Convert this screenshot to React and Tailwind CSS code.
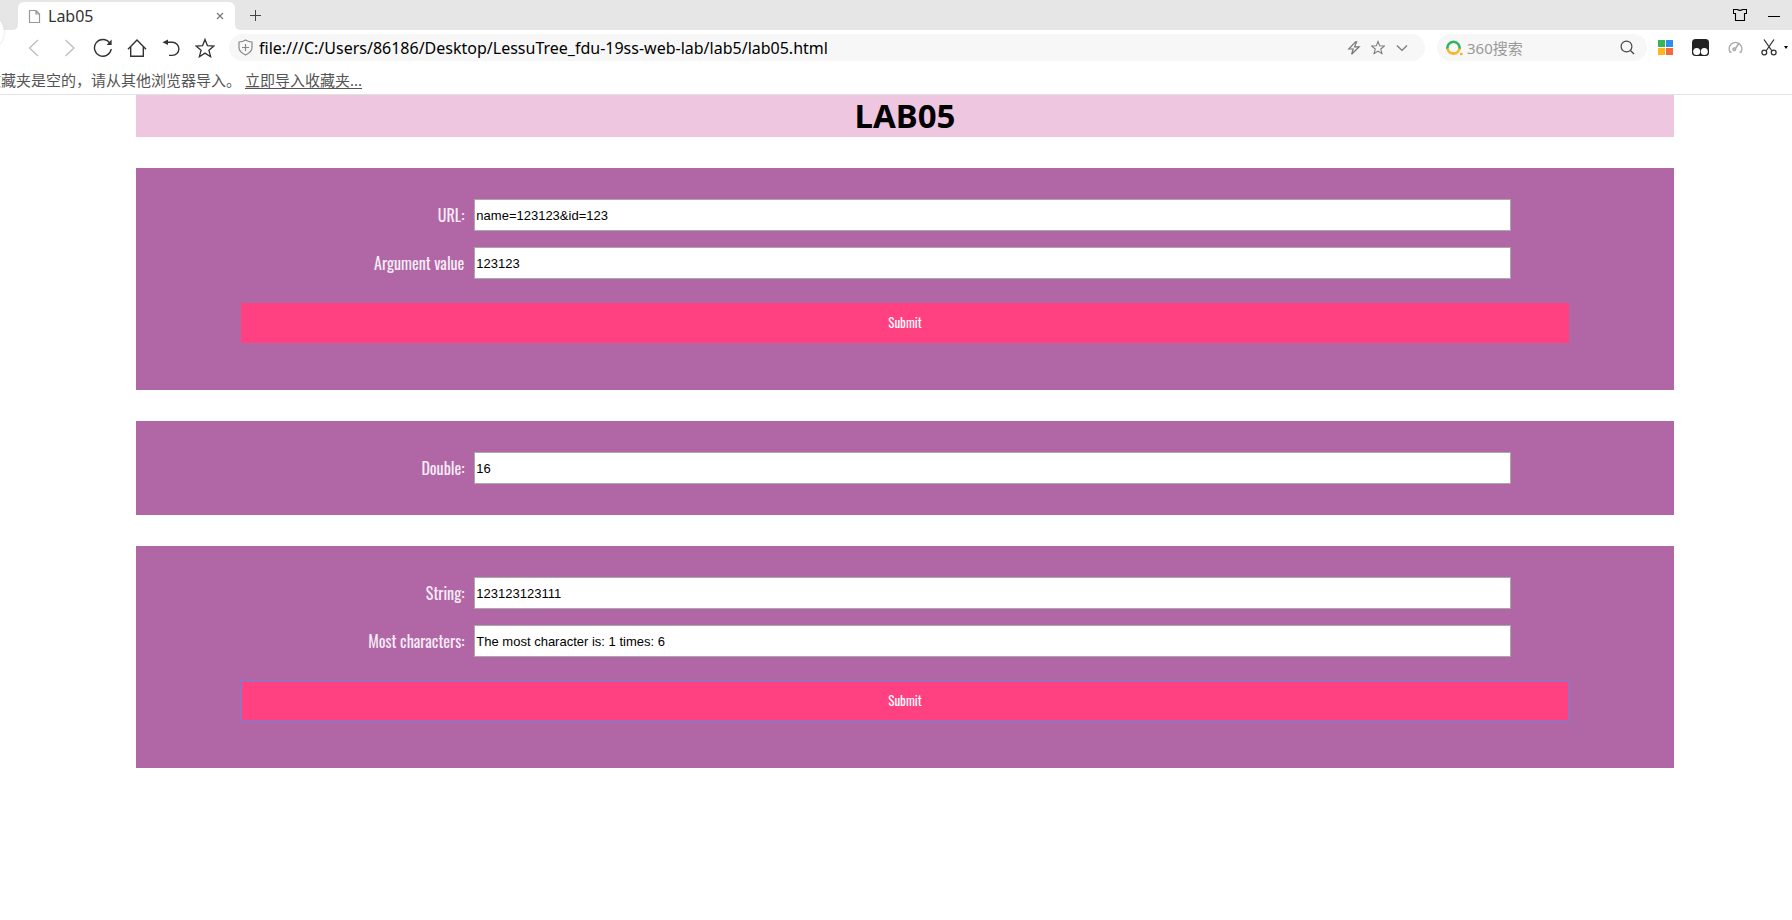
import React from "react";

const icon = {
  fill: "none",
  stroke: "currentColor",
  strokeWidth: 1.2,
  "aria-hidden": true,
};

function IconButton({ label, className, children }) {
  return (
    <button type="button" aria-label={label} className={"flex shrink-0 items-center justify-center " + className}>
      {children}
    </button>
  );
}

function Star({ size, width = 1.3 }) {
  return (
    <svg {...icon} width={size} height={size} viewBox="0 0 20 20" strokeWidth={width}>
      <path d="M10 1.4 12.4 7.6 19 8 13.9 12.2 15.6 18.7 10 15.1 4.4 18.7 6.1 12.2 1 8 7.6 7.6Z" />
    </svg>
  );
}

function TabStrip() {
  return (
    <div className="relative flex h-[30px] bg-[#e6e6e6] pl-3">
      <span
        aria-hidden="true"
        className="absolute top-[13px] -left-[34px] size-[38px] rounded-full bg-white shadow-[0_0_2px_#ccc]"
      />
      <svg className="self-end" width="6" height="6" viewBox="0 0 6 6" aria-hidden="true">
        <path d="M6 0v6H0Q6 6 6 0z" fill="#fff" />
      </svg>
      <div className="mt-[2px] flex w-[217px] items-center rounded-t-md bg-white pr-[9px] pl-[10px]">
        <svg {...icon} className="text-[#999]" width="13" height="15" viewBox="0 0 13 15">
          <path d="M1.5 1.5h6.5l3.5 3.5v8.500h-10zM8 1.500V5h3.500" />
        </svg>
        <span className="ml-[7px] flex-1 text-base leading-6 text-[#333]">Lab05</span>
        <IconButton label="Close tab" className="size-3 text-[#777]">
          <svg {...icon} width="8" height="8" viewBox="0 0 8 8">
            <path d="m1 1 6 6M7 1 1 7" />
          </svg>
        </IconButton>
      </div>
      <svg className="self-end" width="6" height="6" viewBox="0 0 6 6" aria-hidden="true">
        <path d="M0 0v6h6Q0 6 0 0z" fill="#fff" />
      </svg>
      <IconButton label="New tab" className="ml-[6px] w-4 text-[#444]">
        <svg {...icon} width="11" height="11" viewBox="0 0 11 11" strokeWidth="1">
          <path d="M5.500 0v11M0 5.500h11" />
        </svg>
      </IconButton>
      <IconButton label="Skin" className="ml-auto w-4 text-black">
        <svg {...icon} width="14" height="14" viewBox="0 0 14 14" strokeWidth="1.100">
          <path d="M.5 1.500H4.300Q7 3.300 9.700 1.500H13.500V5.500H11.500V12.500H2.500V5.500H.5z" />
        </svg>
      </IconButton>
      <IconButton label="Minimize" className="mr-[10px] ml-[18px] w-4 text-black">
        <svg {...icon} width="12" height="12" viewBox="0 0 12 12">
          <path d="M0 7.500h12" strokeWidth="1" />
        </svg>
      </IconButton>
    </div>
  );
}

function Toolbar() {
  return (
    <div className="flex h-[35px] items-center pl-[23px]">
      <div className="flex items-center gap-[10px] text-[#333]">
        <IconButton label="Back" className="size-6 text-[#bbb]">
          <svg {...icon} width="20" height="20" viewBox="0 0 20 20">
            <path d="M13 2 4.500 10 13 18" />
          </svg>
        </IconButton>
        <IconButton label="Forward" className="size-6 text-[#bbb]">
          <svg {...icon} width="20" height="20" viewBox="0 0 20 20">
            <path d="M6.500 2 15 10 6.500 18" />
          </svg>
        </IconButton>
        <IconButton label="Reload" className="size-6">
          <svg {...icon} width="20" height="20" viewBox="0 0 20 20" strokeWidth="1.4">
            <path d="M16.600 4.800A8.400 8.400 0 1 0 18.200 11" />
            <path d="M18.600 1.500V7h-5z" fill="currentColor" stroke="none" />
          </svg>
        </IconButton>
        <IconButton label="Home" className="size-6">
          <svg {...icon} width="20" height="20" viewBox="0 0 20 20" strokeWidth="1.4">
            <path d="M1 11.200 10 2l9 9.200M3.700 9v9.300h12.600V9" />
          </svg>
        </IconButton>
        <IconButton label="Undo" className="size-6">
          <svg {...icon} width="20" height="20" viewBox="0 0 20 20" strokeWidth="1.4">
            <path d="M5 4.200h6.300a6.600 6.600 0 0 1 0 13.200H8" />
            <path d="M1.500 4.200 7 1.400v5.600z" fill="currentColor" stroke="none" />
          </svg>
        </IconButton>
        <IconButton label="Favorites" className="size-6">
          <Star size={20} />
        </IconButton>
      </div>
      <div className="ml-[12px] flex h-[27px] flex-1 items-center rounded-full bg-[#f7f7f7] pr-[16px] pl-[9px]">
        <svg {...icon} className="text-[#888]" width="15" height="17" viewBox="0 0 15 17">
          <path d="M7.500 1Q10.500 3 14 3v5.500q0 4.500-6.500 7.500Q1 13 1 8.500V3Q4.500 3 7.500 1ZM7.500 5v7M4 8.500h7" />
        </svg>
        <input
          aria-label="Address"
          defaultValue="file:///C:/Users/86186/Desktop/LessuTree_fdu-19ss-web-lab/lab5/lab05.html"
          className="ml-[6px] h-full flex-1 bg-transparent text-base text-black outline-none"
        />
        <div className="flex items-center gap-[10px] text-[#777]">
          <IconButton label="Speed mode" className="size-[14px]">
            <svg {...icon} width="14" height="14" viewBox="0 0 14 14">
              <path d="M8.500.8 1.800 8h4.400L4.600 13.200 12.200 5.800H7.600L9.600.8Z" />
            </svg>
          </IconButton>
          <IconButton label="Add favorite" className="size-[14px]">
            <Star size={15} width={1.5} />
          </IconButton>
          <IconButton label="History" className="size-[14px]">
            <svg {...icon} width="12" height="8" viewBox="0 0 12 8">
              <path d="m1 1.500 5 5 5-5" />
            </svg>
          </IconButton>
        </div>
      </div>
      <div className="ml-[12px] flex h-[27px] w-[210px] items-center rounded-full bg-[#f7f7f7] pr-[12px] pl-[9px]">
        <svg width="17" height="16" viewBox="0 0 17 16" fill="none" strokeWidth="2.600" aria-hidden="true">
          <path d="M1.500 9A6.100 6.100 0 1 1 13.500 9" stroke="#2cb563" />
          <path d="M1.500 8.600A6.100 6.100 0 0 0 13.500 8.600" stroke="#f2b827" />
          <circle cx="15.300" cy="14" r="1.300" fill="#f6a523" />
        </svg>
        <input
          aria-label="Search"
          placeholder="360搜索"
          className="ml-[4px] h-full w-0 flex-1 bg-transparent text-[15px] outline-none placeholder:text-[#999]"
        />
        <IconButton label="Search" className="size-4 text-[#444]">
          <svg {...icon} width="15" height="15" viewBox="0 0 15 15">
            <circle cx="6.500" cy="6.500" r="5.400" />
            <path d="m10.500 10.500 3.500 3.500" />
          </svg>
        </IconButton>
      </div>
      <div className="ml-[10px] flex items-center">
        <IconButton label="Apps" className="size-4">
          <svg width="15" height="15" viewBox="0 0 15 15" aria-hidden="true">
            <path d="M0 0h7v7H0z" fill="#35b558" />
            <path d="M8 0h7v7H8z" fill="#2b8df0" />
            <path d="M0 8h7v7H0z" fill="#fdb71c" />
            <path d="M8 8h7v7H8z" fill="#f6693c" />
          </svg>
        </IconButton>
        <IconButton label="Scripts" className="ml-[18px] size-[18px]">
          <svg width="17" height="17" viewBox="0 0 17 17" aria-hidden="true">
            <rect width="17" height="17" rx="3.500" fill="#222" />
            <circle cx="4.700" cy="12.600" r="3.500" fill="#fff" />
            <circle cx="12.300" cy="12.600" r="3.500" fill="#fff" />
          </svg>
        </IconButton>
        <IconButton label="Accelerator" className="ml-[18px] size-4 text-[#aaa]">
          <svg {...icon} width="15" height="15" viewBox="0 0 15 15" strokeWidth="1.500">
            <path d="M3.500 12.200H2.200A6.300 6.300 0 1 1 12.800 12.200H11.500M5 9.200a1.300 1.300 0 1 0 2.600 0 1.300 1.300 0 0 0-2.600 0M7.500 8.500l3-4.500" />
          </svg>
        </IconButton>
        <IconButton label="Screenshot" className="ml-[18px] size-4 text-[#333]">
          <svg {...icon} width="16" height="17" viewBox="0 0 16 17" strokeWidth="1.300">
            <path d="M3 .5 11 12M13 .5 5 12" />
            <circle cx="3.300" cy="13.500" r="2.400" />
            <circle cx="12.700" cy="13.500" r="2.400" />
          </svg>
        </IconButton>
        <IconButton label="Screenshot options" className="mr-[4px] ml-[7px] w-1 text-black">
          <svg width="4" height="3" viewBox="0 0 4 3" aria-hidden="true">
            <path d="M0 0h4L2 3z" fill="currentColor" />
          </svg>
        </IconButton>
      </div>
    </div>
  );
}

function FavoritesBar() {
  return (
    <div className="flex h-[30px] items-center overflow-hidden border-b border-[#e2e2e4] text-[15px] leading-6 whitespace-nowrap text-[#555]">
      <p className="-ml-[14px]">收藏夹是空的，请从其他浏览器导入。</p>
      <a href="#import" className="ml-1 underline underline-offset-2">
        立即导入收藏夹...
      </a>
    </div>
  );
}

function Field({ id, label, value }) {
  return (
    <div className="flex items-center">
      <label
        htmlFor={id}
        className="w-[22%] pr-[10px] text-right font-['Oswald','Liberation_Sans_Narrow','Liberation_Sans',sans-serif] text-[16px] leading-6 text-[#f8ecf6]"
      >
        {label}
      </label>
      <input
        id={id}
        defaultValue={value}
        className="h-8 w-[67.4%] border border-[#a9a9a9] bg-white px-px font-['Liberation_Sans',sans-serif] text-[13px] text-black outline-none"
      />
    </div>
  );
}

function Panel({ fields, submit, focused }) {
  return (
    <form className="bg-[#b167a6] pt-[31px] pb-[31px]" onSubmit={(e) => e.preventDefault()}>
      <div className="flex flex-col gap-4">
        {fields.map((f) => (
          <Field key={f.id} {...f} />
        ))}
      </div>
      {submit && (
        <div className="flex px-[6.8%] pt-6 pb-4">
          <button
            type="submit"
            className={
              "h-10 w-full bg-[#ff4081] font-['Oswald','Liberation_Sans_Narrow','Liberation_Sans',sans-serif] text-[13px] text-white " +
              (focused ? "border border-[#9a70bb] ring-1 ring-[#9a70bb]" : "")
            }
          >
            Submit
          </button>
        </div>
      )}
    </form>
  );
}

export default function App() {
  return (
    <div className="min-h-screen bg-white font-['Noto_Sans','Noto_Sans_CJK_SC',sans-serif]">
      <header>
        <TabStrip />
        <Toolbar />
        <FavoritesBar />
      </header>
      <main className="flex flex-col gap-[31px] pr-[118px] pl-[136px]">
        <h1 className="h-[42px] bg-[#eec6e0] text-center text-[33px] leading-[42px] font-bold text-black">LAB05</h1>
        <Panel
          submit
          fields={[
            { id: "url", label: "URL:", value: "name=123123&id=123" },
            { id: "argument", label: "Argument value", value: "123123" },
          ]}
        />
        <Panel fields={[{ id: "double", label: "Double:", value: "16" }]} />
        <Panel
          submit
          focused
          fields={[
            { id: "string", label: "String:", value: "123123123111" },
            { id: "most", label: "Most characters:", value: "The most character is: 1 times: 6" },
          ]}
        />
      </main>
    </div>
  );
}
